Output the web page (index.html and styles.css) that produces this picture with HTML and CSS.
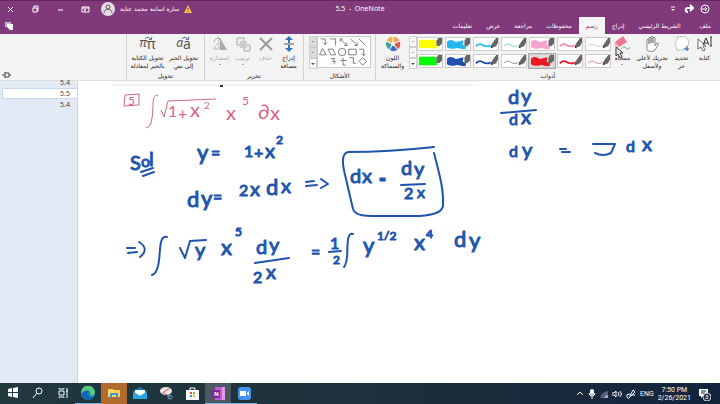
FILE: index.html
```html
<!DOCTYPE html>
<html lang="ar">
<head>
<meta charset="utf-8">
<title>5.5 - OneNote</title>
<link rel="stylesheet" href="styles.css">
</head>
<body>
<svg class="defs" aria-hidden="true">
  <defs>
    <g id="nib"><path d="M19 7l2-3 3-4h2v5l-2 4-3 1z" fill="#666"/><path d="M19 7l2 3-3 1z" fill="#333"/></g>
    <g id="marker"><path d="M1 4c3-3 6-2 9 0 3 1 6-2 9-1l-1 4 4 2-1 3c-4 1-7-2-10-1-4 1-6 1-10-1z" fill="currentColor"/><path d="M20 3l2-3h4v6l-3 3-3-1z" fill="#666"/></g>
    <g id="block"><path d="M1 2h19v5l1 4H1z" fill="currentColor"/><path d="M20 3l2-3h4v6l-3 3-3-1z" fill="#666"/></g>
    <g id="pen"><path d="M2 9c4-4 6-2 8-1s5 2 8 0" fill="none" stroke="currentColor" stroke-width="2"/><use href="#nib"/></g>
    <g id="fine"><path d="M2 9c4-4 6-2 8-1s5 2 8 0" fill="none" stroke="currentColor"/><use href="#nib"/></g>
  </defs>
</svg>

<header class="header" dir="rtl">
  <div class="titlebar">
    <div class="quick">
      <button aria-label="لمس"><svg width="10" height="10" viewBox="0 0 10 10"><circle cx="5" cy="5" r="4" class="line"/><path d="M2 5h5M5 3l2 2-2 2" class="line"/></svg></button>
      <button aria-label="إعادة"><svg width="10" height="10" viewBox="0 0 10 10"><path d="M8 4H4C1 4 1 8 4 8M6 1l3 3-3 3" class="line bold"/></svg></button>
      <button aria-label="تخصيص"><svg width="10" height="10" viewBox="0 0 10 10"><path d="M3 3h4" class="line"/><path d="M3 5h4L5 7z" fill="#fff"/></svg></button>
    </div>
    <h1 class="title" dir="ltr">5.5 &nbsp;- &nbsp;OneNote</h1>
    <div class="account">
      <svg width="8" height="8" viewBox="0 0 8 8"><path d="M4 0l4 8H0z" fill="#f6c342"/><path d="M4 3v2M4 6v1" stroke="#543" /></svg>
      <span class="user">سارة اسامة محمد عناية</span>
      <svg class="avatar" width="14" height="14" viewBox="0 0 14 14"><circle cx="7" cy="7" r="7" fill="#e5dce4"/><circle cx="7" cy="5" r="2" class="dark"/><path d="M3 11c0-5 8-5 8 0" class="dark"/></svg>
      <div class="window">
        <button aria-label="خيارات الشريط"><svg width="9" height="9" viewBox="0 0 9 9"><path d="M1 2h7v5H1zM1 3h7M4 7V4M3 5l1-1 1 1" class="line"/></svg></button>
        <button aria-label="تصغير"><svg width="9" height="9" viewBox="0 0 9 9"><path d="M2 5h5" class="line"/></svg></button>
        <button aria-label="استعادة"><svg width="9" height="9" viewBox="0 0 9 9"><path d="M2 3h4v4H2zM3 3V1h4v5H6" class="line"/></svg></button>
        <button aria-label="إغلاق"><svg width="9" height="9" viewBox="0 0 9 9"><path d="M2 2l5 5M7 2L2 7" class="line"/></svg></button>
      </div>
    </div>
  </div>
  <nav class="tabs">
    <a href="#" class="file">ملف</a><a href="#">الشريط الرئيسي</a><a href="#">إدراج</a><a href="#" class="active">رسم</a><a href="#">محفوظات</a><a href="#">مراجعة</a><a href="#">عرض</a><a href="#">تعليمات</a>
    <button class="notes" aria-label="ملاحظات ملصقة"><svg width="10" height="10" viewBox="0 0 10 10"><path d="M1 1h6v5H1z" fill="#cbb2c9"/><path d="M3 3h6v6H6L3 6z" fill="#fff"/></svg></button>
  </nav>
</header>

<section class="ribbon" dir="rtl">
  <div class="group tools">
    <div class="row">
      <button class="cmd narrow"><svg width="16" height="16" viewBox="0 0 16 16"><path d="M1 3v10l3-2 2 4 2-1-2-4h3z" fill="#fff" stroke="#666"/><path d="M6 9l3-7 3 7M7 7h4M14 1v9M13 1h2M13 10h2" fill="none" stroke="#333"/></svg><span>كتابة</span></button>
      <button class="cmd narrow"><svg width="16" height="16" viewBox="0 0 16 16"><path d="M4 1l6-1 5 4-1 6-6 4H3L1 8z" fill="#fff" stroke="#888" stroke-dasharray="1 1"/><path d="M13 10v5M10 13h5" stroke="#2853a5"/></svg><span>تحديد<br>حر</span></button>
      <button class="cmd wide"><svg width="16" height="16" viewBox="0 0 16 16"><path d="M3 10V4q1-2 2 0v4-6q1-2 2 0v5-6q1-2 2 0v6-5q1-2 2 0v8l2-3q2 0 1 2l-3 5q-3 3-7 1-2-2-1-5z" fill="#fff" stroke="#888"/></svg><span>تحريك لأعلى<br>ولأسفل</span></button>
      <button class="cmd eraser"><svg width="16" height="16" viewBox="0 0 16 16"><path d="M9 0l4 6-8 5-4-5z" fill="#e9788a"/><path d="M1 6l4 5-2 2-3-5z" fill="#f8b7bd"/><path d="M7 13q3-4 5-1t4-1" fill="none" stroke="#70a7ad"/></svg><span>ممحاة</span><i class="caret"></i><svg class="pointer" width="9" height="12" viewBox="0 0 9 12"><path d="M1 0v9l2-2 2 4 2-1-2-4h3z" fill="#eee" stroke="#333"/></svg></button>
      <div class="pens">
        <button aria-label="رمادي"><svg viewBox="0 0 26 13" color="#c5c5c5"><use href="#fine"/></svg></button>
        <button aria-label="وردي"><svg viewBox="0 0 26 13" color="#f092ab"><use href="#pen"/></svg></button>
        <button aria-label="تمييز وردي"><svg viewBox="0 0 26 13" color="#f5a2ce"><use href="#marker"/></svg></button>
        <button aria-label="فيروزي"><svg viewBox="0 0 26 13" color="#78ccda"><use href="#fine"/></svg></button>
        <button aria-label="سماوي"><svg viewBox="0 0 26 13" color="#28bde9"><use href="#pen"/></svg></button>
        <button aria-label="تمييز سماوي"><svg viewBox="0 0 26 13" color="#24b9ee"><use href="#marker"/></svg></button>
        <button aria-label="تمييز أصفر"><svg viewBox="0 0 26 13" color="#ff0"><use href="#block"/></svg></button>
        <button aria-label="أحمر رفيع"><svg viewBox="0 0 26 13" color="#df7886"><use href="#fine"/></svg></button>
        <button aria-label="أحمر"><svg viewBox="0 0 26 13" color="#e71930"><use href="#pen"/></svg></button>
        <button aria-label="تمييز أحمر" class="chosen"><svg viewBox="0 0 26 13" color="#ed1821"><use href="#marker"/></svg></button>
        <button aria-label="أسود"><svg viewBox="0 0 26 13" color="#888"><use href="#fine"/></svg></button>
        <button aria-label="أزرق"><svg viewBox="0 0 26 13" color="#244eab"><use href="#pen"/></svg></button>
        <button aria-label="تمييز أزرق"><svg viewBox="0 0 26 13" color="#2350ad"><use href="#marker"/></svg></button>
        <button aria-label="تمييز أخضر"><svg viewBox="0 0 26 13" color="#0f0"><use href="#block"/></svg></button>
      </div>
      <div class="scroll"><button aria-label="أعلى"><i class="caret up"></i></button><button aria-label="أسفل"><i class="caret"></i></button><button aria-label="المزيد"><i class="caret more"></i></button></div>
      <button class="cmd color"><svg width="16" height="16" viewBox="0 0 16 16"><g stroke="#f4f4f4"><path d="M8 8V0a8 8 0 0 1 7 5z" fill="#f2a46b"/><path d="M8 8l7-3a8 8 0 0 1-2 9z" fill="#d65e4c"/><path d="M8 8l5 6a8 8 0 0 1-9 0z" fill="#356fba"/><path d="M8 8l-4 6A8 8 0 0 1 1 5z" fill="#42a3a0"/><path d="M8 8L1 5a8 8 0 0 1 7-5z" fill="#edb34e"/></g><circle cx="8" cy="8" r="2" fill="#f4f4f4"/></svg><span>اللون<br>والسماكة</span></button>
    </div>
    <h2>أدوات</h2>
  </div>
  <div class="group shapes">
    <div class="row">
      <svg class="shapebox" width="54" height="32" viewBox="0 0 54 32"><g fill="none" stroke="#777"><path d="M43 2l7 7M34 2l7 7m0-3v3h-3M23 2l7 7m-7-4V2h3m4 4v3h-3M12 2h6v7M2 2h5v6m-2-2l2 2 2-2"/><path d="M43 13h5v7m-2-2l2 2 2-2M32 13h8v6h-8zM10 13h5l3 6h-5zM4 12l4 7H1z"/><circle cx="25" cy="16" r="4"/><path d="M47 22l4 4-4 4-4-4zM33 22h4v6h3M23 25h7m-4-3v8h3M13 23h4l-2 3h3l-2 3"/></g></svg>
      <div class="scroll"><button aria-label="أعلى" disabled><i class="caret up"></i></button><button aria-label="أسفل" disabled><i class="caret"></i></button><button aria-label="المزيد"><i class="caret more"></i></button></div>
    </div>
    <h2>الأشكال</h2>
  </div>
  <div class="group edit">
    <div class="row">
      <button class="cmd"><svg width="16" height="16" viewBox="0 0 16 16"><path d="M8 0l4 4H9v3H7V4H4zM8 16l4-4H9V9H7v3H4z" fill="#3474b7"/><path d="M3 8h10" stroke="#555"/></svg><span>إدراج<br>مسافة</span></button>
      <button class="cmd" disabled><svg width="16" height="16" viewBox="0 0 16 16"><path d="M2 2l12 12M14 2L2 14" stroke="#999" stroke-width="2"/></svg><span>حذف</span></button>
      <button class="cmd" disabled><svg width="16" height="16" viewBox="0 0 16 16"><path d="M2 2h7v7H2zM9 9h6v6H9z" fill="#eee" stroke="#aaa"/><path d="M5 5h7v7H5z" fill="#ccc"/></svg><span>ترتيب</span><i class="caret"></i></button>
      <button class="cmd" disabled><svg width="16" height="16" viewBox="0 0 16 16"><path d="M8 14V2l7 12z" fill="#aaa"/><path d="M7 13V6l-6 7z" fill="#eee" stroke="#bbb"/><path d="M2 6q1-5 6-3M6 1l2 2-2 2" fill="none" stroke="#aaa"/></svg><span>استدارة</span><i class="caret"></i></button>
    </div>
    <h2>تحرير</h2>
  </div>
  <div class="group convert">
    <div class="row">
      <button class="cmd"><b class="sym" dir="ltr"><em>a</em>a<svg width="9" height="5" viewBox="0 0 9 5"><path d="M1 3q3-4 6 1M5 3l2 1 1-3" fill="none" stroke="#4668b2"/></svg></b><span>تحويل الحبر<br>إلى نص</span></button>
      <button class="cmd"><b class="sym" dir="ltr"><em>π</em>π<svg width="9" height="5" viewBox="0 0 9 5"><path d="M1 3q3-4 6 1M5 3l2 1 1-3" fill="none" stroke="#4668b2"/></svg></b><span>تحويل الكتابة<br>بالحبر لمعادلة</span></button>
    </div>
    <h2>تحويل</h2>
  </div>
  <button class="pin" aria-label="تثبيت الشريط"><svg width="9" height="6" viewBox="0 0 9 6"><path d="M0 3h3M3 0v6M3 1h4v4H3M7 3h2" fill="none" stroke="#444"/></svg></button>
</section>

<main class="work">
  <nav class="pages"><a href="#">5.4</a><a href="#" class="current">5.5</a><a href="#">5.4</a></nav>
  <div class="canvas">
    <svg class="ink" width="642" height="302" viewBox="78 80 642 302" role="img" aria-label="حل التكامل">
      <path d="M112 84H478" stroke="#e8e8e8"/><path d="M220 85h3" stroke="#333" stroke-width="2"/>
      <g class="red">
        <path d="M125 94l14-1v11l-15 1zM158 95c-7-4-4 13-6 22q-1 9-6 10M161 109l3 7 4-16 48-2"/>
        <text x="128" y="104" class="t12">5</text>
        <text x="168" y="116" class="t16">1</text><text x="178" y="118" class="t16">+</text><text x="190" y="116" class="t20">x</text><text x="204" y="108" class="t10">2</text>
        <text x="226" y="119" class="t20">x</text><text x="242" y="104" class="t12">5</text><text x="258" y="118" class="t20">∂</text><text x="270" y="119" class="t20">x</text>
      </g>
      <g class="blue">
        <text x="130" y="169" class="t20">S</text><text x="141" y="166" class="t16">o</text><text x="149" y="165" class="t20">l</text>
        <path d="M141 171l12-4M143 175l11-4"/>
        <text x="197" y="159" class="t22">y</text><text x="211" y="158" class="t16">=</text>
        <text x="244" y="156" class="t16">1</text><text x="254" y="157" class="t16">+</text><text x="265" y="157" class="t20">x</text><text x="276" y="143" class="t12">2</text>
        <text x="187" y="206" class="t22">d</text><text x="201" y="205" class="t22">y</text><text x="213" y="202" class="t16">=</text>
        <text x="239" y="195" class="t16">2</text><text x="250" y="195" class="t20">x</text><text x="266" y="194" class="t22">d</text><text x="281" y="192" class="t20">x</text>
        <path d="M306 181l8-1M306 185l11-1M321 178l7 5-7 4"/>
        <path d="M434 146q-45 5-86 5c-8 2-5 15-2 27l7 30c3 8 15 7 29 7h38c15-1 22-4 23-10 1-17-4-33-9-53"/>
        <text x="350" y="182" class="t20">d</text><text x="362" y="182" class="t20">x</text><text x="379" y="182" class="t12">=</text>
        <text x="401" y="174" class="t20">d</text><text x="414" y="175" class="t20">y</text><path d="M401 184l24-1"/><text x="404" y="198" class="t16">2</text><text x="417" y="197" class="t16">x</text>
        <path d="M127 247h8M128 252l9-1M139 241q11 7 1 15M167 236c-9-3-6 19-9 29q-2 8-6 9M180 247l5 10 5-17 16-1"/>
        <text x="195" y="256" class="t20">y</text><text x="221" y="254" class="t22">x</text><text x="235" y="235" class="t12">5</text>
        <text x="256" y="253" class="t20">d</text><text x="269" y="251" class="t20">y</text><path d="M255 262l34-5"/><text x="253" y="282" class="t16">2</text><text x="266" y="278" class="t20">x</text>
        <text x="311" y="257" class="t16">=</text><text x="330" y="248" class="t16">1</text><path d="M329 251l12-1"/><text x="333" y="263" class="t12">2</text>
        <path d="M353 233c-7-2-5 14-6 23q-1 8-3 10"/>
        <text x="363" y="252" class="t22">y</text><text x="377" y="239" class="t12">1/2</text>
        <text x="414" y="249" class="t22">x</text><text x="426" y="237" class="t12">4</text><text x="454" y="246" class="t22">d</text><text x="469" y="247" class="t22">y</text>
        <text x="508" y="103" class="t20">d</text><text x="521" y="102" class="t20">y</text><path d="M501 112l35-3"/><text x="509" y="124" class="t16">d</text><text x="521" y="123" class="t20">x</text>
        <text x="509" y="156" class="t16">d</text><text x="522" y="156" class="t20">y</text><path d="M560 148h6M562 151h8M593 143h22l-4 9q-8 4-16 0"/>
        <text x="626" y="151" class="t16">d</text><text x="642" y="150" class="t20">x</text>
      </g>
    </svg>
  </div>
</main>

<footer class="taskbar">
  <div class="apps">
    <button aria-label="Start"><svg width="12" height="12" viewBox="0 0 12 12"><path d="M1 2l4-1v4H1zM6 1l5-1v5H6zM1 6h4v4L1 9zM6 6h5v5l-5-1z" fill="#fff"/></svg></button>
    <button aria-label="Search"><svg width="12" height="12" viewBox="0 0 12 12"><circle cx="7" cy="4" r="3" class="line"/><path d="M5 6l-4 5" class="line"/></svg></button>
    <button aria-label="Task view"><svg width="12" height="12" viewBox="0 0 12 12"><path d="M2 4h5v4H2zM2 1v1h5V1M2 11v-1h5v1M10 1v10M9 4h2" class="line"/></svg></button>
    <button aria-label="Edge" class="open"><svg width="14" height="14" viewBox="0 0 14 14"><circle cx="7" cy="7" r="7" fill="#1681c9"/><path d="M0 6a7 7 0 0 1 14 1q-1 4-5 2 1-5-4-4-4 0-5 3z" fill="#55c781"/><path d="M1 7q6-5 7-1-3 1-1 4 2 2 5 1-3 4-7 2-4-2-4-6z" fill="#1564ae"/></svg></button>
    <button aria-label="File Explorer" class="orange"><svg width="12" height="12" viewBox="0 0 12 12"><path d="M0 2h5l1 1h6v7H0z" fill="#ffd45b"/><path d="M2 11V6h8v5H8V8H4v3z" fill="#4092d0"/></svg></button>
    <button aria-label="Mail"><svg width="14" height="12" viewBox="0 0 14 12"><path d="M0 4l7-4 7 4v8H0z" fill="#1672b9"/><path d="M2 3h10v3L7 9 2 6z" fill="#fff"/><path d="M0 5l7 4 7-4v7H0z" fill="#26a7e2"/></svg></button>
    <button aria-label="Snip"><svg width="14" height="14" viewBox="0 0 14 14"><ellipse cx="7" cy="5" rx="6" ry="4" fill="#f1e9e8"/><path d="M2 8l9-6M5 7l6 4" stroke="#c95b60"/><circle cx="11" cy="11" r="2" fill="none" stroke="#6aa4cc"/></svg></button>
    <button aria-label="Store"><svg width="13" height="13" viewBox="0 0 13 13"><path d="M4 4V1h5v3" class="line"/><path d="M0 3h13v10H0z" fill="#fff"/><path d="M4 5h2v2H4z" fill="#e85334"/><path d="M7 5h2v2H7z" fill="#7eb742"/><path d="M4 8h2v2H4z" fill="#229fd8"/><path d="M7 8h2v2H7z" fill="#f5b82e"/></svg></button>
    <button aria-label="OneNote" class="open lit"><svg width="13" height="13" viewBox="0 0 13 13"><path d="M3 0h10v13H3z" fill="#c65bd4"/><path d="M10 0h3v13h-3z" fill="#e398e9"/><path d="M0 3h8v8H0z" fill="#7b2594"/><text x="2" y="9" font-size="6" font-weight="700" fill="#fff">N</text></svg></button>
    <button aria-label="Zoom" class="open"><svg width="13" height="13" viewBox="0 0 13 13"><rect width="13" height="13" rx="3" fill="#4593f0"/><path d="M2 4h6v5H2zM9 6l2-2v5L9 7z" fill="#fff"/></svg></button>
  </div>
  <div class="tray">
    <svg width="8" height="8" viewBox="0 0 8 8"><path d="M1 5l3-3 3 3" class="line"/></svg>
    <svg width="8" height="10" viewBox="0 0 8 10"><rect x="2" width="4" height="6" rx="2" fill="#fff"/><path d="M1 4q0 3 3 3t3-3M4 7v3" class="line"/></svg>
    <svg width="8" height="8" viewBox="0 0 8 8"><path d="M0 8q1-6 8-7v7z" fill="#52617a"/><path d="M4 8q0-2 4-3v3z" fill="#aab"/></svg>
    <svg width="10" height="8" viewBox="0 0 10 8"><path d="M0 3h2l2-2v6L2 5H0M6 2q2 2 0 4M8 1q3 3 0 6" class="line"/></svg>
    <svg width="10" height="10" viewBox="0 0 10 10"><path d="M1 8q-1-3 2-3t1 3-3 0M4 7l3-6 2 2-4 4M6 6h3" class="line"/></svg>
    <span class="lang">ENG</span>
    <time>7:50 PM<br>2/26/2021</time>
    <svg width="13" height="13" viewBox="0 0 13 13"><path d="M1 1h9v7H5l-2 2V8H1z" fill="#fff"/><path d="M3 3h5M3 5h4" stroke="#14233d"/><circle cx="9" cy="9" r="4" fill="#26344e" stroke="#ccc"/><text x="7" y="11" font-size="6" fill="#fff">3</text></svg>
  </div>
</footer>
</body>
</html>
```
FILE: styles.css
```css
* { box-sizing: border-box; }
body { margin: 0; min-height: 100vh; display: flex; flex-direction: column; background: #fff; font-family: "DejaVu Sans", "Liberation Sans", sans-serif; font-size: 6px; line-height: 8px; }
button { padding: 0; border: 0; background: none; font: inherit; color: inherit; display: flex; align-items: center; justify-content: center; }
a { color: inherit; text-decoration: none; }
h1, h2 { margin: 0; font: inherit; }
svg { display: block; flex: none; }
.defs { position: absolute; width: 0; height: 0; }
.line { fill: none; stroke: #fff; }
.line.bold { stroke-width: 2; }
.dark { fill: none; stroke: #665565; }

.header { background: #80397b; color: #fff; border-top: 1px solid #68265f; }
.titlebar { display: grid; grid-template-columns: 1fr auto 1fr; align-items: center; height: 16px; }
.quick { display: flex; gap: 6px; padding-inline-start: 10px; }
.title { font-family: "Noto Sans", sans-serif; font-size: 7px; }
.account { display: flex; align-items: center; justify-content: flex-end; gap: 5px; }
.user { white-space: nowrap; }
.window { display: flex; gap: 16px; padding-inline: 6px 6px; }
.tabs { display: flex; align-items: stretch; height: 17px; padding-inline: 2px 4px; }
.tabs a { display: flex; align-items: center; padding: 0 7px; white-space: nowrap; }
.tabs .file { margin-inline-end: 5px; }
.tabs .active { background: #f4f4f4; color: #80397b; }
.notes { margin-inline-start: auto; }

.ribbon { display: flex; min-height: 47px; background: #f3f3f3; border-bottom: 1px solid #ddd; color: #222; }
.group { display: flex; flex-direction: column; justify-content: space-between; padding: 2px 0 0; border-left: 1px solid #d2d2d2; }
.group h2 { text-align: center; }
.row { display: flex; align-items: flex-start; justify-content: center; }
.tools { width: 345px; }
.tools .row { justify-content: flex-start; padding-inline-start: 4px; }
.shapes { width: 72px; }
.edit { width: 99px; }
.convert { width: 78px; }
.cmd { position: relative; flex-direction: column; justify-content: flex-start; gap: 2px; white-space: nowrap; min-width: 23px; }
.cmd:disabled { color: #aaa; }
.narrow { width: 23px; }
.wide { width: 37px; }
.eraser { width: 22px; }
.color { width: 34px; }
.convert .cmd { width: 36px; }
.pointer { position: absolute; left: 4px; top: 11px; }
.caret { width: 0; height: 0; border: 1px solid transparent; border-top-color: #555; border-bottom: 0; }
.caret.up { transform: rotate(180deg); }
.caret.more { border-width: 2px 2px 0; }
.pens { display: grid; grid-template-columns: repeat(7, 26px); gap: 3px 2px; padding-top: 1px; }
.pens button { height: 14px; background: #fff; border: 1px solid #ccc; }
.pens svg { width: 100%; height: 12px; }
.pens .chosen { outline: 1px solid #aaa; background: #ddd; }
.scroll { display: flex; flex-direction: column; width: 8px; }
.scroll button { height: 11px; border: 1px solid #d0d0d0; background: #fafafa; }
.scroll button:disabled { background: #ddd; }
.shapebox { background: #fff; border: 1px solid #ccc; }
.sym { position: relative; height: 16px; font: 14px/14px "Noto Sans", sans-serif; color: #555; }
.sym em { font-size: 12px; vertical-align: 2px; }
.sym svg { position: absolute; left: 5px; top: 0; }
.pin { margin-inline-start: auto; align-self: flex-end; padding: 0 2px 2px; }

.work { display: flex; flex: 1; }
.pages { width: 78px; flex: none; background: #e2eaf6; border-right: 1px solid #c9d6ea; padding-left: 2px; font-family: "Noto Sans", sans-serif; font-size: 7px; color: #444; display: flex; flex-direction: column; }
.pages a { height: 11px; line-height: 11px; padding-right: 7px; text-align: right; }
.pages a:first-child { height: 7px; line-height: 4px; }
.pages .current { background: #fff; border: 1px solid #c5d8ee; border-right: 0; line-height: 9px; }
.canvas { flex: 1; min-width: 0; overflow: hidden; }
.ink text { font-family: Lato, sans-serif; }
.red { fill: none; stroke: #d76480; }
.blue { fill: none; stroke: #2155ad; stroke-width: 2; stroke-linecap: round; stroke-linejoin: round; }
.red text { fill: #d76480; stroke: none; }
.blue text { fill: #2155ad; stroke-width: 1px; }
.t10 { font-size: 10px; }
.t12 { font-size: 12px; }
.t16 { font-size: 16px; }
.t20 { font-size: 20px; }
.t22 { font-size: 22px; }

.taskbar { display: flex; justify-content: space-between; height: 22px; background: linear-gradient(90deg, #21383f, #1d303b 50%, #14233d); color: #fff; font-family: "Noto Sans", sans-serif; font-size: 7px; }
.apps { display: flex; }
.apps button { width: 25px; border-bottom: 2px solid transparent; }
.apps button:nth-child(n+4) { width: 26px; }
.apps .open { border-color: #71b7e8; }
.apps .orange { background: #b26b2c; }
.apps .lit { background: #4b5962; }
.tray { display: flex; align-items: center; gap: 4px; padding-right: 9px; font-family: Roboto, sans-serif; }
.tray time { text-align: center; padding-right: 3px; }
```
